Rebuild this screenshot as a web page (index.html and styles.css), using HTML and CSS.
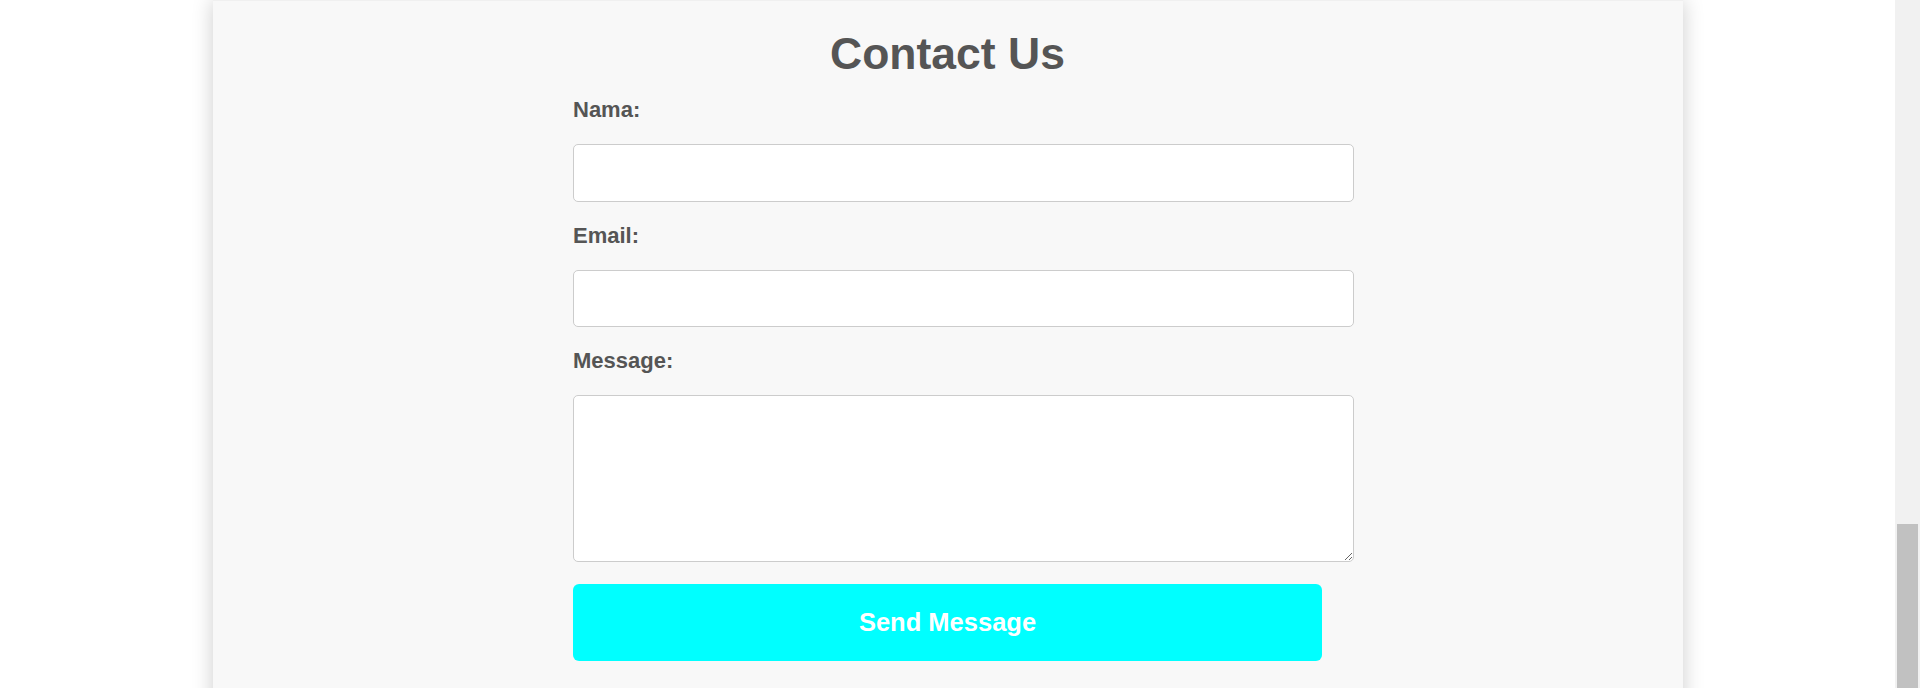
FILE: index.html
```html
<!DOCTYPE html>
<html lang="en">
<head>
<meta charset="utf-8">
<title>Contact Us</title>
<link rel="stylesheet" href="styles.css">
</head>
<body>
<div class="viewport">
  <main class="page">
    <section class="contact">
      <h1 class="contact-title">Contact Us</h1>
      <form class="contact-form">
        <label class="field-label" for="nama">Nama:</label>
        <input class="field-input" type="text" id="nama">
        <label class="field-label" for="email">Email:</label>
        <input class="field-input" type="email" id="email">
        <label class="field-label" for="message">Message:</label>
        <textarea class="field-input field-textarea" id="message"></textarea>
        <button class="send-button" type="button">Send Message</button>
      </form>
    </section>
  </main>
  <div class="scrollbar"><div class="scrollbar-thumb"></div></div>
</div>
</body>
</html>
```
FILE: styles.css
```css
html, body {
  margin: 0;
  padding: 0;
  height: 688px;
  overflow: hidden;
  background: #ffffff;
  font-family: "Liberation Sans", Arial, sans-serif;
}

.viewport {
  display: flex;
  height: 688px;
}

.page {
  flex: 1;
  display: flex;
  justify-content: center;
  overflow: hidden;
}

.contact {
  width: 1470px;
  min-height: 900px;
  background: #f8f8f8;
  box-shadow: 0 0 20px rgba(0, 0, 0, 0.2);
  padding-top: 29px;
  box-sizing: border-box;
  border-top: 1px solid #f0f0f0;
}

.contact-title {
  margin: -1px 0 20px;
  text-align: center;
  font-size: 44.5px;
  line-height: 49px;
  font-weight: bold;
  color: #555555;
}

.contact-form {
  width: 749px;
  margin: 0 auto;
}

.field-label {
  display: block;
  font-size: 22px;
  line-height: 24px;
  font-weight: bold;
  color: #555555;
  margin-bottom: 22px;
}

.field-input {
  display: block;
  width: 100%;
  height: 25.5px;
  padding: 15px;
  margin: 0 0 22px;
  border: 1px solid #cccccc;
  border-radius: 5px;
  background: #ffffff;
  font-family: "Liberation Sans", Arial, sans-serif;
  font-size: 18px;
  box-sizing: content-box;
}

.field-textarea {
  height: 135px;
  resize: both;
}

.send-button {
  display: block;
  width: 100%;
  height: 77px;
  border: none;
  border-radius: 6px;
  background: #00ffff;
  color: #ffffff;
  font-family: "Liberation Sans", Arial, sans-serif;
  font-size: 25.5px;
  font-weight: bold;
  cursor: pointer;
}

.scrollbar {
  width: 25px;
  flex: none;
  background: #f1f1f1;
  display: flex;
  flex-direction: column;
  padding: 524px 2px 0;
  box-sizing: border-box;
}

.scrollbar-thumb {
  flex: 1;
  background: #c1c1c1;
}
```
